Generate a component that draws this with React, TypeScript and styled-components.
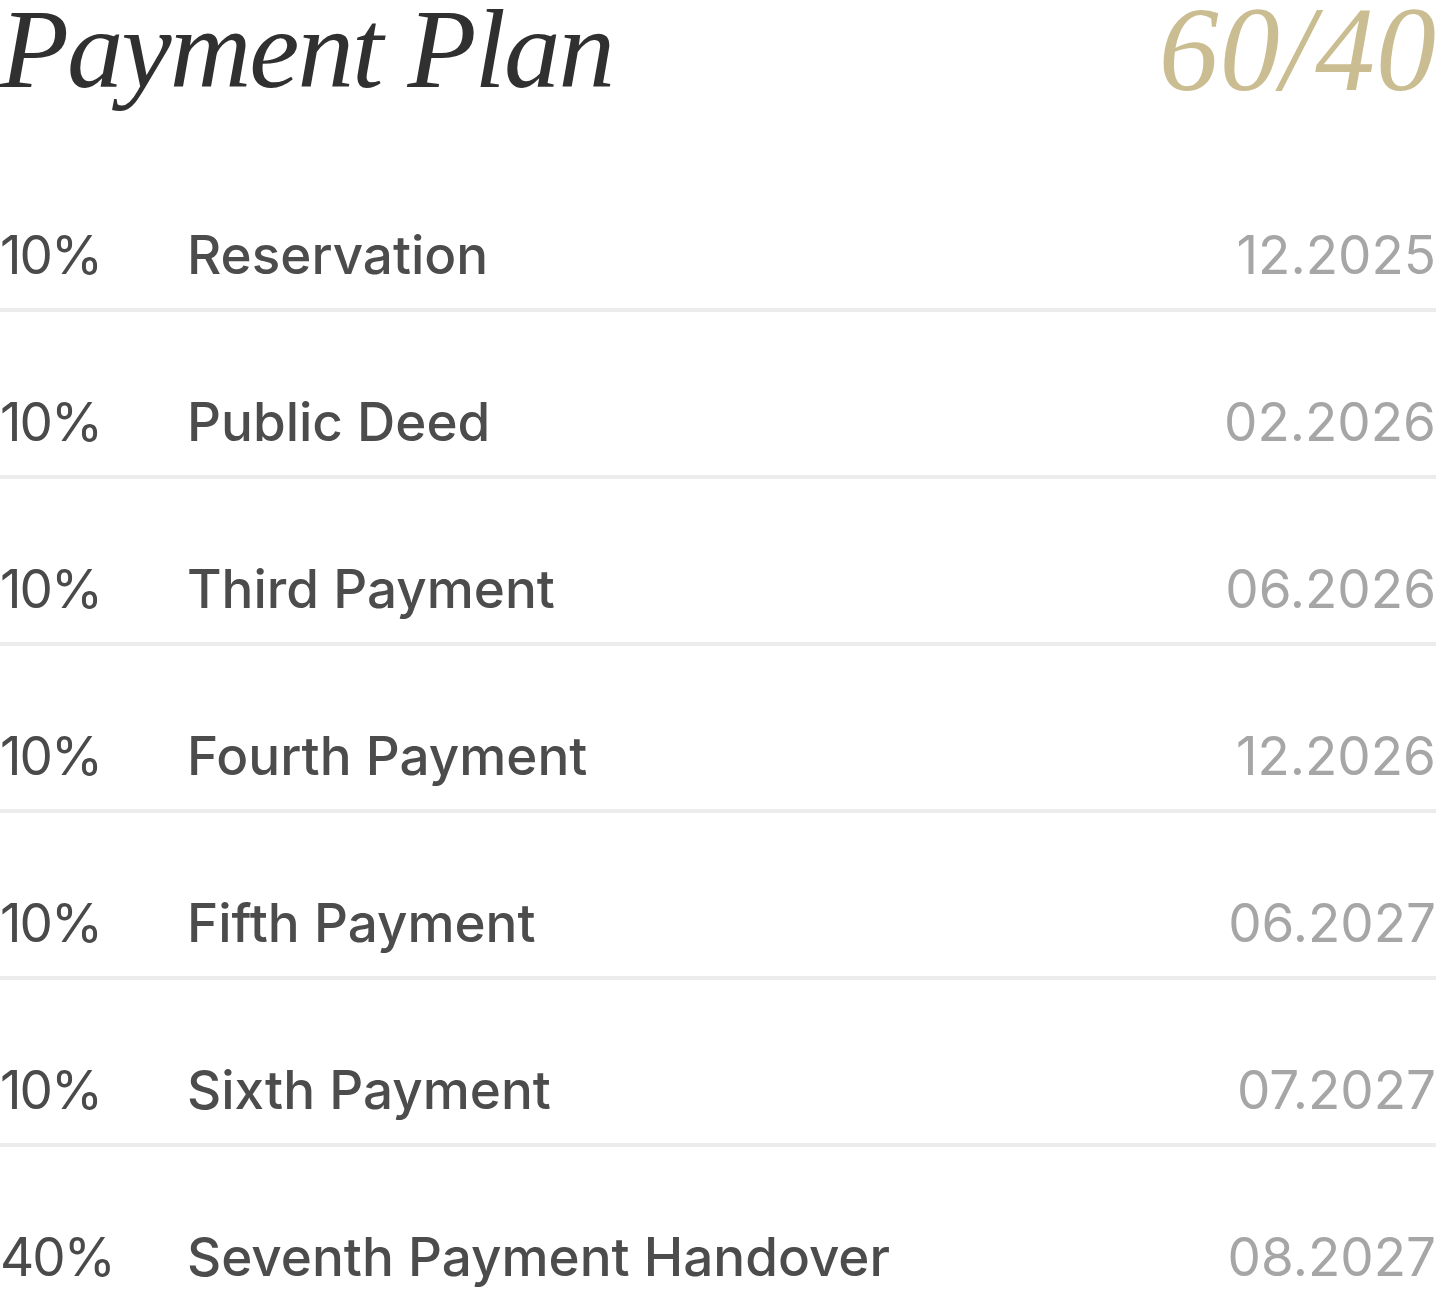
import styled, { createGlobalStyle } from "styled-components"

const GlobalStyle = createGlobalStyle`
    html, body {
        margin: 0;
        padding: 0;
        background: #ffffff;
    }
`

const Page = styled.div`
    width: 1440px;
    height: 1290px;
    overflow: hidden;
    background: #ffffff;
`

const Header = styled.header`
    height: 145px;
    display: flex;
    justify-content: space-between;
    align-items: flex-start;
`

const Title = styled.h1`
    margin: 0;
    font-family: "Liberation Serif", "DejaVu Serif", serif;
    font-style: italic;
    font-weight: 400;
    font-size: 113px;
    line-height: 0.86;
    letter-spacing: -2px;
    color: #303030;
`

const Ratio = styled.span`
    font-family: "Liberation Serif", "DejaVu Serif", serif;
    font-style: italic;
    font-size: 120px;
    line-height: 0.84;
    letter-spacing: 1px;
    color: #cbbd92;
    padding-right: 3px;
`

const List = styled.ul`
    list-style: none;
    margin: 0;
    padding: 0;
`

const Row = styled.li<{ $last?: boolean }>`
    display: grid;
    grid-template-columns: 187px 1fr auto;
    align-items: center;
    margin: 0 4px 0 0;
    padding: 82px 0 25px 0;
    border-bottom: ${(p) => (p.$last ? "none" : "4px solid #ececec")};
    font-family: Inter, "Noto Sans", sans-serif;
    font-size: 53px;
    line-height: 56px;
`

const Percent = styled.span`
    color: #4a4a4a;
    font-weight: 400;
    letter-spacing: -2px;
`

const Label = styled.span`
    color: #4c4c4c;
    font-weight: 500;
`

const Date = styled.span`
    color: #a6a6a6;
    font-weight: 400;
    text-align: right;
`

const payments = [
    { pct: "10%", label: "Reservation", date: "12.2025" },
    { pct: "10%", label: "Public Deed", date: "02.2026" },
    { pct: "10%", label: "Third Payment", date: "06.2026" },
    { pct: "10%", label: "Fourth Payment", date: "12.2026" },
    { pct: "10%", label: "Fifth Payment", date: "06.2027" },
    { pct: "10%", label: "Sixth Payment", date: "07.2027" },
    { pct: "40%", label: "Seventh Payment Handover", date: "08.2027" },
]

export default function App() {
    return (
        <Page>
            <GlobalStyle />
            <Header>
                <Title>Payment Plan</Title>
                <Ratio>60/40</Ratio>
            </Header>
            <List>
                {payments.map((p, i) => (
                    <Row key={p.label} $last={i === payments.length - 1}>
                        <Percent>{p.pct}</Percent>
                        <Label>{p.label}</Label>
                        <Date>{p.date}</Date>
                    </Row>
                ))}
            </List>
        </Page>
    )
}
